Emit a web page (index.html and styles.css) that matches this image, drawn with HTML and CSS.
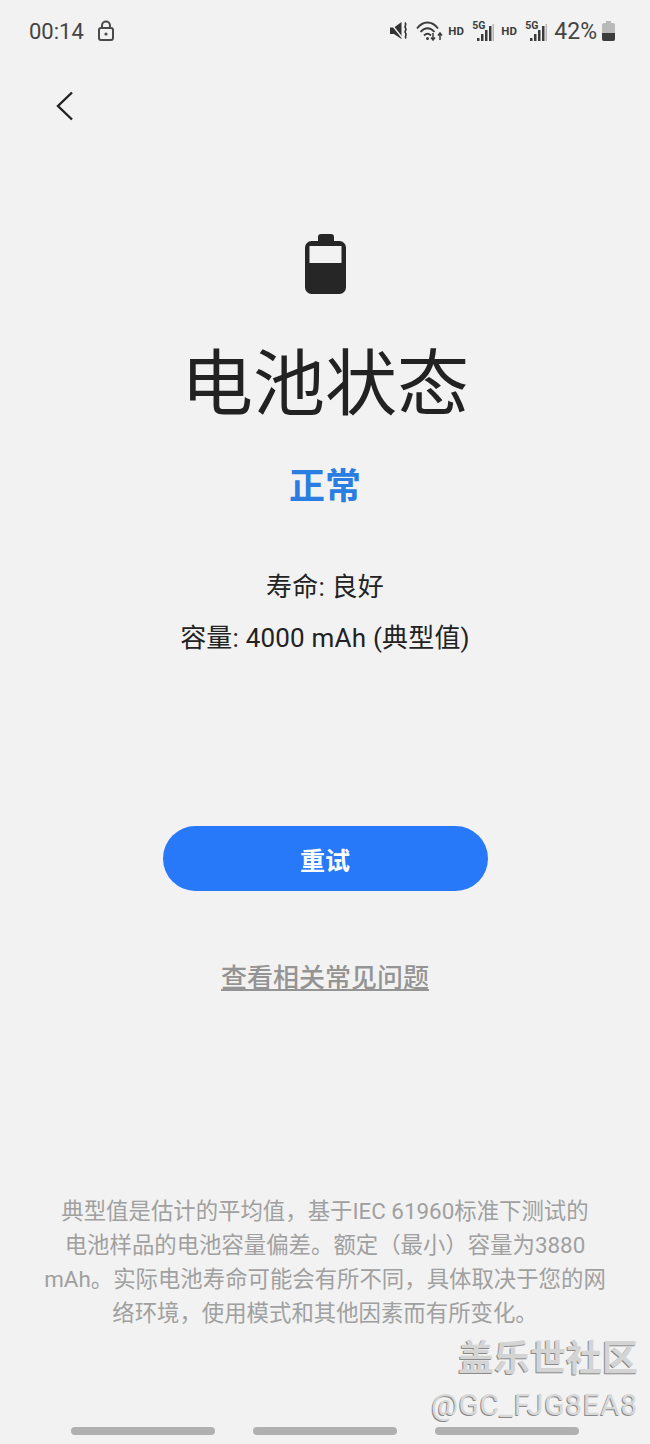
FILE: index.html
```html
<!DOCTYPE html>
<html lang="zh-CN">
<head>
    <meta charset="UTF-8">
    <meta name="viewport" content="width=device-width, initial-scale=1.0">
    <title>电池状态</title>
    <link rel="stylesheet" href="styles.css">
</head>
<body>
    <div class="phone">
        <div class="status-bar">
            <div class="status-left">
                <span class="clock">00:14</span>
                <svg class="lock" width="18" height="22" viewBox="0 0 18 22">
                    <rect x="2" y="8" width="14" height="12" rx="2" fill="none" stroke="#4a4a4a" stroke-width="2"/>
                    <path d="M5 8V5.500a4 4 0 0 1 8 0V8" fill="none" stroke="#4a4a4a" stroke-width="2"/>
                    <circle cx="9" cy="14" r="1.600" fill="#4a4a4a"/>
                </svg>
            </div>
            <div class="status-right">
                <svg class="mute" width="19" height="20" viewBox="0 0 19 20">
                    <path d="M0 6.500h4L11.500 1v17L4 13H0z" fill="#333"/>
                    <path d="M0 1.500l12 15" stroke="#f2f2f2" stroke-width="1.400"/>
                    <path d="M15 1.500c2.500 2.500-1.500 3.500.5 5.500s-2 3 0 5-1.500 3 .5 5.500" fill="none" stroke="#333" stroke-width="1.700"/>
                </svg>
                <svg class="wifi" width="27" height="20" viewBox="0 0 27 20">
                    <path d="M1 7.500C7-.5 16-.5 22 7.500M4.500 11c4.500-5 9.500-5 14 0M8 14.500c2.500-2.500 4.500-2.500 7 0" fill="none" stroke="#3c3c3c" stroke-width="1.800"/>
                    <circle cx="11.500" cy="17.500" r="1.500" fill="#3c3c3c"/>
                    <path d="M17 12v7M15 16.500l2 2.500 2-2.500M24 19v-7M22 14.500l2-2.500 2 2.500" fill="none" stroke="#3c3c3c" stroke-width="1.500"/>
                </svg>
                <span class="hd">HD</span>
                <span class="signal">
                    <span class="five-g">5G</span>
                    <svg width="23" height="21" viewBox="0 0 23 21">
                        <path d="M5 17h2.500v3H5zM9 13h2.500v7H9zM13 9h2.500v11H13zM17 5h2.500v15H17z" fill="#3c3c3c"/>
                        <path d="M20.500 3H22v17h-1.500z" fill="#b5b5b5"/>
                    </svg>
                </span>
                <span class="hd">HD</span>
                <span class="signal">
                    <span class="five-g">5G</span>
                    <svg width="23" height="21" viewBox="0 0 23 21">
                        <path d="M5 17h2.500v3H5zM9 13h2.500v7H9zM13 9h2.500v11H13zM17 5h2.500v15H17z" fill="#3c3c3c"/>
                        <path d="M20.500 3H22v17h-1.500z" fill="#b5b5b5"/>
                    </svg>
                </span>
                <span class="percent">42%</span>
                <svg class="mini-battery" width="13" height="20" viewBox="0 0 13 20">
                    <path d="M4 0h5v2h2a2 2 0 0 1 2 2v14a2 2 0 0 1-2 2H2a2 2 0 0 1-2-2V4a2 2 0 0 1 2-2h2z" fill="#b9b9b9"/>
                    <path d="M0 12h13v6a2 2 0 0 1-2 2H2a2 2 0 0 1-2-2z" fill="#3c3c3c"/>
                </svg>
            </div>
        </div>

        <div class="nav">
            <svg width="20" height="32" viewBox="0 0 20 32">
                <path d="M17 2.500L3 16l14 13.500" fill="none" stroke="#222" stroke-width="2.400"/>
            </svg>
        </div>

        <div class="content">
            <svg class="battery" width="41" height="60" viewBox="0 0 41 60">
                <path d="M13 7V3a3 3 0 0 1 3-3h10a3 3 0 0 1 3 3v4h5.500a6.500 6.500 0 0 1 6.500 6.500v40a6.500 6.500 0 0 1-6.500 6.500h-28a6.500 6.500 0 0 1-6.500-6.500v-40a6.500 6.500 0 0 1 6.500-6.500z" fill="#262626"/>
                <rect x="4.500" y="12" width="32" height="17" fill="#f2f2f2"/>
            </svg>
            <h1 class="title">电池状态</h1>
            <div class="state">正常</div>
            <p class="info first">寿命: 良好</p>
            <p class="info">容量: 4000 mAh (典型值)</p>
            <button class="retry">重试</button>
            <a class="faq" href="#">查看相关常见问题</a>
        </div>

        <p class="note">典型值是估计的平均值，基于IEC 61960标准下测试的<br>电池样品的电池容量偏差。额定（最小）容量为3880<br>mAh。实际电池寿命可能会有所不同，具体取决于您的网<br>络环境，使用模式和其他因素而有所变化。</p>

        <div class="watermark">
            <div class="wm-name">盖乐世社区</div>
            <div class="wm-user">@GC_FJG8EA8</div>
        </div>

        <div class="nav-bars">
            <span></span>
            <span></span>
            <span></span>
        </div>
    </div>
</body>
</html>
```

FILE: styles.css
```css
* {
    box-sizing: border-box;
}

body {
    margin: 0;
    background-color: #f2f2f2;
    font-family: 'Roboto', 'Noto Sans CJK SC', sans-serif;
    color: #222;
}

.phone {
    position: relative;
    width: 650px;
    height: 1444px;
    overflow: hidden;
}

/* status bar */
.status-bar {
    display: flex;
    justify-content: space-between;
    align-items: center;
    height: 30px;
    margin-top: 16px;
    padding: 0 35px 0 29px;
    color: #444;
}

.status-left,
.status-right {
    display: flex;
    align-items: center;
}

.clock {
    font-size: 22px;
}

.lock {
    margin-left: 13px;
}

.mute {
    margin-right: 7px;
}

.wifi {
    margin-right: 5px;
}

.hd {
    width: 16px;
    margin-right: 8px;
    font-size: 11.500px;
    font-weight: 700;
    color: #3c3c3c;
}

.signal {
    position: relative;
    display: flex;
    width: 23px;
    margin-right: 6px;
}

.five-g {
    position: absolute;
    left: 0;
    top: -2px;
    font-size: 10.500px;
    font-weight: 700;
    color: #3c3c3c;
}

.percent {
    margin-right: 5px;
    font-size: 23px;
}

.nav {
    display: flex;
    height: 32px;
    margin-top: 44px;
    padding-left: 55px;
}

.content {
    display: flex;
    flex-direction: column;
    align-items: center;
    padding-top: 112px;
}

.title {
    margin: 40px 0 0;
    font-size: 72px;
    line-height: 102px;
    font-weight: 400;
}

.state {
    margin-top: 26px;
    font-size: 36px;
    line-height: 50px;
    font-weight: 700;
    color: #2a7de1;
}

.info {
    margin: 15px 0 0;
    font-size: 26px;
    line-height: 36px;
    letter-spacing: 0.2px;
    color: #222;
}

.info.first {
    margin-top: 57px;
}

.retry {
    width: 325px;
    height: 65px;
    margin-top: 170px;
    border: none;
    border-radius: 33px;
    background-color: #2878fa;
    color: white;
    font-family: inherit;
    font-size: 25px;
    font-weight: 700;
}

.faq {
    margin-top: 68px;
    font-size: 26px;
    line-height: 38px;
    font-weight: 500;
    color: #949494;
}

.note {
    margin: 197px 0 0;
    font-size: 22.400px;
    line-height: 34px;
    text-align: center;
    color: #a0a0a0;
}

/* added on top of the screenshot, sits over the page */
.watermark {
    position: absolute;
    right: 12px;
    top: 1336px;
    text-align: right;
}

.wm-name {
    font-size: 36px;
    line-height: 46px;
    font-weight: 700;
    color: #d4d4d4;
    text-shadow: -1px 1px 0 #8a8a8a;
}

.wm-user {
    font-size: 30px;
    line-height: 46px;
    font-family: 'Roboto', sans-serif;
    letter-spacing: 0.6px;
    color: #d8d8d8;
    text-shadow: -1px 1px 0 #8a8a8a;
}

.nav-bars {
    position: absolute;
    left: 71px;
    top: 1427px;
    display: flex;
    gap: 38px;
}

.nav-bars span {
    width: 144px;
    height: 8px;
    border-radius: 4px;
    background-color: #b0b0b0;
}
```
